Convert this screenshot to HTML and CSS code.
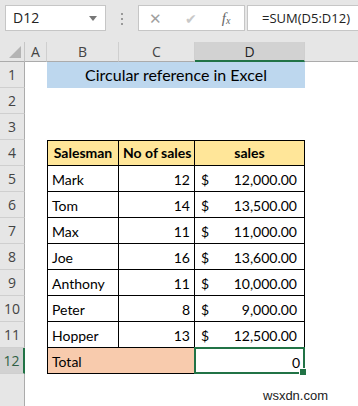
FILE: index.html
```html
<!DOCTYPE html>
<html lang="en">
<head>
  <meta charset="UTF-8">
  <title>Circular reference in Excel</title>
  <link rel="stylesheet" href="styles.css">
</head>
<body>
  <div class="topbar">
    <div class="namebox">D12<span class="caret"></span></div>
    <div class="grip"><i></i><i></i><i></i></div>
    <div class="fxbox">
      <span class="ico cancel">&#x2715;</span>
      <span class="ico ok">&#x2714;</span>
      <span class="ico fx">f<sub>x</sub></span>
    </div>
    <div class="formula">=SUM(D5:D12)</div>
  </div>

  <div class="sheet">
    <div class="corner"><span class="tri"></span></div>
    <div class="colhead">A</div>
    <div class="colhead">B</div>
    <div class="colhead">C</div>
    <div class="colhead sel">D</div>
    <div class="colhead last"></div>

    <div class="rowhead">1</div>
    <div></div>
    <div class="title">Circular reference in Excel</div>
    <div></div>

    <div class="rowhead">2</div>
    <div></div><div></div><div></div><div></div><div></div>

    <div class="rowhead">3</div>
    <div></div><div></div><div></div><div></div><div></div>

    <div class="rowhead">4</div>
    <div></div>
    <div class="t th first top">Salesman</div>
    <div class="t th top">No of sales</div>
    <div class="t th top">sales</div>
    <div></div>

    <div class="rowhead">5</div>
    <div></div>
    <div class="t first">Mark</div>
    <div class="t num">12</div>
    <div class="t cur"><span>$</span><span>12,000.00</span></div>
    <div></div>

    <div class="rowhead">6</div>
    <div></div>
    <div class="t first">Tom</div>
    <div class="t num">14</div>
    <div class="t cur"><span>$</span><span>13,500.00</span></div>
    <div></div>

    <div class="rowhead">7</div>
    <div></div>
    <div class="t first">Max</div>
    <div class="t num">11</div>
    <div class="t cur"><span>$</span><span>11,000.00</span></div>
    <div></div>

    <div class="rowhead">8</div>
    <div></div>
    <div class="t first">Joe</div>
    <div class="t num">16</div>
    <div class="t cur"><span>$</span><span>13,600.00</span></div>
    <div></div>

    <div class="rowhead">9</div>
    <div></div>
    <div class="t first">Anthony</div>
    <div class="t num">11</div>
    <div class="t cur"><span>$</span><span>10,000.00</span></div>
    <div></div>

    <div class="rowhead">10</div>
    <div></div>
    <div class="t first">Peter</div>
    <div class="t num">8</div>
    <div class="t cur"><span>$</span><span>9,000.00</span></div>
    <div></div>

    <div class="rowhead">11</div>
    <div></div>
    <div class="t first">Hopper</div>
    <div class="t num">13</div>
    <div class="t cur"><span>$</span><span>12,500.00</span></div>
    <div></div>

    <div class="rowhead sel">12</div>
    <div></div>
    <div class="t first total">Total</div>
    <div class="t num active">0<span class="handle"></span></div>
    <div></div>

    <div class="rowhead blank"></div>
    <div class="fill"><span class="mark">wsxdn.com</span></div>
  </div>
</body>
</html>
```

FILE: styles.css
```css
body { margin: 0; background: #fff; font-family: Lato, "Open Sans", sans-serif; color: #000; }

.topbar {
  display: flex;
  align-items: flex-start;
  height: 42px;
  padding: 5px 0 0 5px;
  box-sizing: border-box;
  background: #e6e6e6;
}
.namebox {
  position: relative;
  width: 101px;
  height: 26px;
  box-sizing: border-box;
  background: #fff;
  border: 1px solid #c6c6c6;
  font: 14px "Open Sans", sans-serif;
  line-height: 24px;
  padding-left: 7px;
  color: #222;
}
.caret {
  position: absolute;
  right: 8px;
  top: 10px;
  border-left: 4px solid transparent;
  border-right: 4px solid transparent;
  border-top: 5px solid #777;
}
.grip {
  width: 32px;
  display: flex;
  flex-direction: column;
  align-items: center;
  gap: 3px;
  padding-top: 8px;
}
.grip i { width: 2px; height: 2px; background: #999; }
.fxbox {
  width: 107px;
  height: 26px;
  box-sizing: border-box;
  background: #fff;
  border: 1px solid #c6c6c6;
  display: flex;
  align-items: center;
  color: #a0a0a0;
}
.ico { display: block; text-align: center; }
.cancel { width: 34px; font-size: 15px; }
.ok { width: 36px; font-size: 14px; color: #c8c8c8; }
.fx { width: 36px; font: italic 15px "Liberation Serif", serif; color: #666; }
.fx sub { font-size: 10px; vertical-align: -1px; }
.formula {
  flex: 1;
  margin-left: 2px;
  height: 26px;
  box-sizing: border-box;
  background: #fff;
  border: 1px solid #c6c6c6;
  border-right: 0;
  font: 13px "Open Sans", sans-serif;
  line-height: 24px;
  padding-left: 14px;
  color: #222;
}

.sheet {
  display: grid;
  grid-template-columns: 25px 22px 72px 76px 110px 53px;
  grid-template-rows: 20px repeat(12, 26px) 32px;
  font-size: 14px;
}
.sheet > div { box-sizing: border-box; }

.corner {
  position: relative;
  background: #e6e6e6;
  border-right: 1px solid #c6c6c6;
  border-bottom: 1px solid #ababab;
}
.tri {
  position: absolute;
  right: 3px;
  bottom: 3px;
  border-left: 12px solid transparent;
  border-bottom: 12px solid #b4b4b4;
}
.colhead {
  background: #e6e6e6;
  border-right: 1px solid #cfcfcf;
  border-bottom: 1px solid #ababab;
  text-align: center;
  font: 14px "Open Sans", sans-serif;
  line-height: 19px;
  color: #444;
}
.colhead.sel { background: #d2d2d2; border-bottom: 2px solid #217346; color: #222; }
.colhead.last { border-right: 0; }

.rowhead {
  background: #e6e6e6;
  border-right: 1px solid #ababab;
  border-bottom: 1px solid #cfcfcf;
  text-align: center;
  font: 14px "Open Sans", sans-serif;
  line-height: 26px;
  color: #444;
}
.rowhead.sel { background: #d2d2d2; border-right: 2px solid #217346; color: #2f5f45; }
.rowhead.blank { border-bottom: 0; }

.title {
  grid-column: span 3;
  background: #bdd7ee;
  text-align: center;
  font-size: 16px;
  line-height: 26px;
}

.t {
  border-right: 1px solid #000;
  border-bottom: 1px solid #000;
  line-height: 24px;
  padding: 2px 4px 0;
  white-space: nowrap;
}
.t.first { border-left: 1px solid #000; }
.t.top { border-top: 1px solid #000; padding-top: 0; }
.th { background: #ffe699; font-weight: bold; text-align: center; }
.num { text-align: right; }
.cur { display: flex; justify-content: space-between; padding: 2px 7px 0 6px; }
.total { grid-column: span 2; background: #f8cbad; }
.active {
  position: relative;
  border: 2px solid #217346;
  margin: -1px 0 0 -1px;
  line-height: 24px;
  padding: 2px 3px 0 0;
}
.handle {
  position: absolute;
  right: -4px;
  bottom: -4px;
  width: 6px;
  height: 6px;
  background: #217346;
  border: 1px solid #fff;
}
.fill { grid-column: span 5; position: relative; }
.mark {
  position: absolute;
  left: 238px;
  top: 14px;
  font: 13px "Liberation Sans", Arial, sans-serif;
  color: #222;
}
```
